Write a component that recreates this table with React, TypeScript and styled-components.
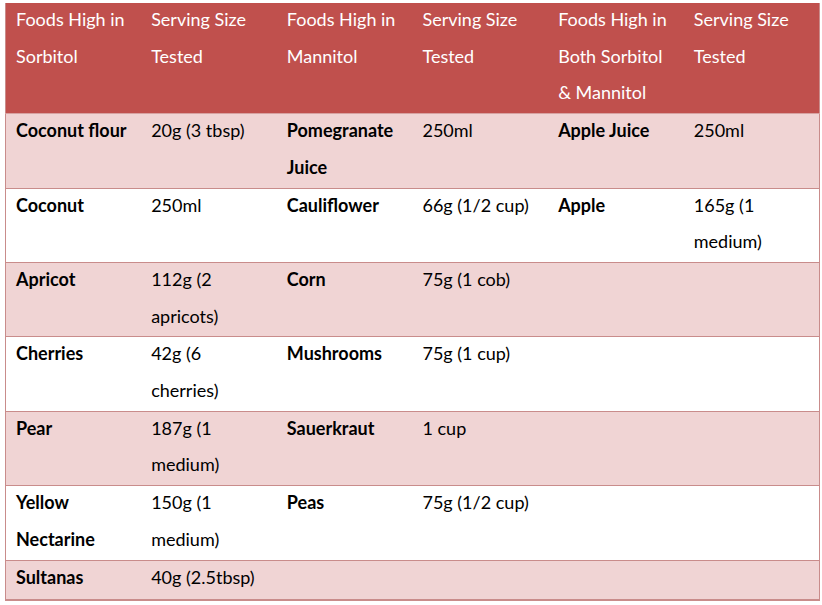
import React from "react";
import styled, { createGlobalStyle } from "styled-components";

const Global = createGlobalStyle`
  html, body { margin: 0; padding: 0; background: #ffffff; }
  body { font-family: Lato, "Open Sans", sans-serif; }
`;

const Wrap = styled.div`
  padding: 3px 0 0 5px;
`;

const Table = styled.table`
  width: 815px;
  table-layout: fixed;
  border-collapse: collapse;
  border-left: 1px solid #c98c8b;
  border-right: 1px solid #c98c8b;
  border-bottom: 2px solid #c98c8b;
`;

const HeadCell = styled.th`
  background: #c0504d;
  color: #ffffff;
  font-weight: 400;
  font-size: 18px;
  line-height: 36.7px;
  text-align: left;
  vertical-align: top;
  padding: 0 0 0 10px;
  border-bottom: 1px solid #d7a2a1;
`;

const Row = styled.tr<{ $shade: boolean }>`
  background: ${(p) => (p.$shade ? "#f0d4d4" : "#ffffff")};
`;

const Cell = styled.td<{ $bold?: boolean; $last?: boolean }>`
  font-size: 18px;
  line-height: 36.7px;
  color: #000000;
  font-weight: ${(p) => (p.$bold ? 700 : 400)};
  vertical-align: top;
  padding: 0 0 ${(p) => (p.$last ? "2px" : "0")} 10px;
  border-bottom: 1px solid #c98c8b;
`;

const Text = styled.div`
  margin: -2px 0 2px;
  white-space: nowrap;
`;

const headers: string[][] = [
  ["Foods High in", "Sorbitol"],
  ["Serving Size", "Tested"],
  ["Foods High in", "Mannitol"],
  ["Serving Size", "Tested"],
  ["Foods High in", "Both Sorbitol", "& Mannitol"],
  ["Serving Size", "Tested"],
];

const rows: string[][][] = [
  [["Coconut flour"], ["20g (3 tbsp)"], ["Pomegranate", "Juice"], ["250ml"], ["Apple Juice"], ["250ml"]],
  [["Coconut"], ["250ml"], ["Cauliflower"], ["66g (1/2 cup)"], ["Apple"], ["165g (1", "medium)"]],
  [["Apricot"], ["112g (2", "apricots)"], ["Corn"], ["75g (1 cob)"], [], []],
  [["Cherries"], ["42g (6", "cherries)"], ["Mushrooms"], ["75g (1 cup)"], [], []],
  [["Pear"], ["187g (1", "medium)"], ["Sauerkraut"], ["1 cup"], [], []],
  [["Yellow", "Nectarine"], ["150g (1", "medium)"], ["Peas"], ["75g (1/2 cup)"], [], []],
  [["Sultanas"], ["40g (2.5tbsp)"], [], [], [], []],
];

const Lines = ({ lines }: { lines: string[] }) => (
  <Text>
    {lines.map((l, i) => (
      <React.Fragment key={i}>
        {i > 0 && <br />}
        {l}
      </React.Fragment>
    ))}
  </Text>
);

export default function App() {
  return (
    <>
      <Global />
      <Wrap>
        <Table>
          <thead>
            <tr>
              {headers.map((h, i) => (
                <HeadCell key={i}>
                  <Lines lines={h} />
                </HeadCell>
              ))}
            </tr>
          </thead>
          <tbody>
            {rows.map((r, ri) => (
              <Row key={ri} $shade={ri % 2 === 0}>
                {r.map((c, ci) => (
                  <Cell key={ci} $bold={ci % 2 === 0} $last={ri === rows.length - 1}>
                    <Lines lines={c} />
                  </Cell>
                ))}
              </Row>
            ))}
          </tbody>
        </Table>
      </Wrap>
    </>
  );
}
